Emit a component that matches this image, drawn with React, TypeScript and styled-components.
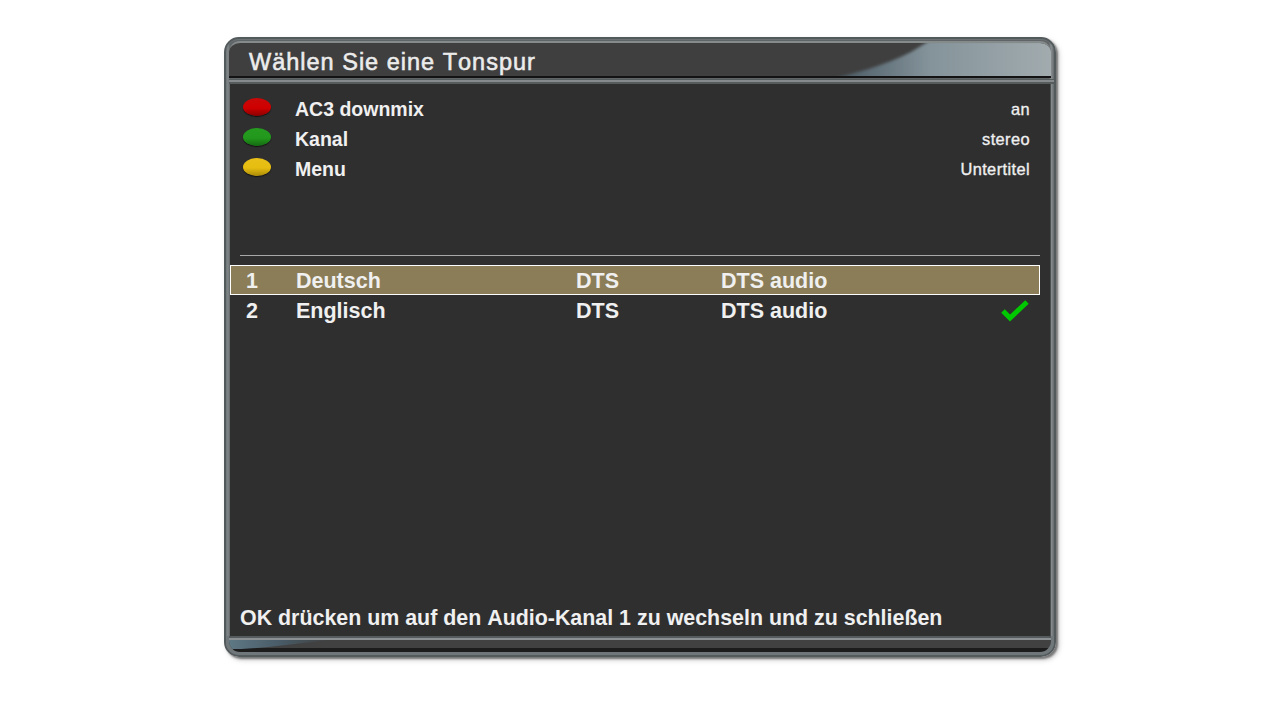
import React from "react";
import styled, { createGlobalStyle } from "styled-components";

const Global = createGlobalStyle`
  html, body { margin: 0; padding: 0; background: #fff; }
  body { width: 1280px; height: 720px; overflow: hidden; font-family: "Liberation Sans", Arial, sans-serif; font-kerning: none; }
`;

const Page = styled.div`
  width: 1280px;
  height: 720px;
  padding: 37px 0 0 224px;
  box-sizing: border-box;
`;

const Frame = styled.div`
  position: relative;
  width: 832px;
  height: 620px;
  box-sizing: border-box;
  display: flex;
  flex-direction: column;
  border-radius: 15px;
  border: 2px solid #535a5c;
  background: linear-gradient(to right, #6f7678, #828889 2px, #5f6567 4px, #5f6567 calc(100% - 5px), #8a9091 calc(100% - 3px), #666c6e 100%);
  padding: 0 3px 0 4px;
  box-shadow: 2px 2px 2px rgba(90, 90, 90, 0.75), 3px 3px 5px rgba(120, 120, 120, 0.4);
`;

const Header = styled.div`
  position: relative;
  height: 45px;
  margin: 0 -3px 0 -4px;
  flex: none;
  box-sizing: border-box;
  border-radius: 13px 13px 0 0;
  border-top: 1px solid #6c7273;
  overflow: hidden;
  display: flex;
  align-items: flex-start;
`;

const HeaderInner = styled.div`
  position: relative;
  margin: 1px 3px 0 3px;
  flex: 1;
  height: 37px;
  background: #3f3f3f;
  border-top: 2px solid #858a8b;
  border-bottom: 2px solid #131313;
  box-sizing: border-box;
  border-radius: 11px 11px 0 0;
  overflow: hidden;
`;

const Sheen = styled.svg`
  position: absolute;
  right: 0;
  top: 0;
  width: 240px;
  height: 36px;
`;

const Title = styled.h1`
  position: relative;
  margin: 0;
  padding: 6px 0 0 20px;
  font-size: 23.5px;
  line-height: 26px;
  font-weight: 400;
  letter-spacing: 1px;
  color: #ececec;
  -webkit-text-stroke: 0.55px #ececec;
`;

const HeaderRule = styled.div`
  position: absolute;
  left: 3px;
  right: 0;
  bottom: 0;
  height: 5px;
  background: linear-gradient(#555a5b, #555a5b 1px, #858a8c 1px, #858a8c 3px, #565b5c 3px);
`;

const Panel = styled.main`
  flex: 1;
  display: flex;
  flex-direction: column;
  background: #2f2f2f;
  min-height: 0;
  border-right: 1px solid #4a4f50;
  padding-top: 10px;
`;

const KeyList = styled.div`
  display: flex;
  flex-direction: column;
  padding: 0 20px 0 13px;
  height: 161px;
  flex: none;
  box-sizing: border-box;
`;

const KeyRow = styled.div`
  display: flex;
  align-items: center;
  height: 30px;
  color: #f0f0f0;
`;

const Pill = styled.span<{ $c: string; $d: string; $l: string }>`
  width: 28px;
  height: 18px;
  flex: none;
  margin-top: -5px;
  border-radius: 50%;
  background: linear-gradient(${(p) => p.$l}, ${(p) => p.$c} 55%, ${(p) => p.$d} 100%);
  box-shadow: 0 1px 1px #141414;
`;

const KeyLabel = styled.span`
  margin-left: 24px;
  flex: 1;
  font-size: 19.5px;
  font-weight: 700;
`;

const KeyValue = styled.span`
  padding-top: 1px;
  font-size: 16.4px;
  font-weight: 400;
  letter-spacing: 0.4px;
  -webkit-text-stroke: 0.35px #f0f0f0;
`;

const Divider = styled.hr`
  flex: none;
  margin: 0 10px 9px 10px;
  border: 0;
  height: 1px;
  background: #a8a8a8;
`;

const Tracks = styled.div`
  flex: 1;
  padding-right: 10px;
`;

const Track = styled.div<{ $active?: boolean }>`
  height: 30px;
  box-sizing: border-box;
  padding-top: 2px;
  display: grid;
  grid-template-columns: 65px 280px 145px 1fr 40px;
  align-items: center;
  color: #f0f0f0;
  font-size: 21.5px;
  font-weight: 700;
  border: 1px solid ${(p) => (p.$active ? "#fff" : "transparent")};
  background: ${(p) => (p.$active ? "#8b7d58" : "transparent")};
`;

const Num = styled.span`
  padding-left: 15px;
`;

const Check = styled.svg`
  width: 30px;
  height: 26px;
  display: block;
  margin-top: -2px;
`;

const Hint = styled.div`
  flex: none;
  height: 30px;
  padding: 0 0 3px 10px;
  color: #f0f0f0;
  font-size: 21.4px;
  font-weight: 700;
  line-height: 30px;
`;

const Foot = styled.footer`
  flex: none;
  height: 19px;
  margin: 0 -3px 0 -4px;
  padding: 0 3px 3px 3px;
  box-sizing: border-box;
  background: #70777a;
  border-radius: 0 0 13px 13px;
  display: flex;
`;

const FootBand = styled.div`
  position: relative;
  flex: 1;
  overflow: hidden;
  border-radius: 0 0 11px 11px;
  background: linear-gradient(#555b5d 0, #555b5d 2px, #8b9092 2px, #8b9092 4px, #414141 4px, #414141 12px, #1c1c1c 12px);
`;

const FootSheen = styled.svg`
  position: absolute;
  left: 0;
  top: 4px;
  width: 100px;
  height: 9px;
`;

export default function App() {
  return (
    <Page>
      <Global />
      <Frame>
        <Header>
          <HeaderInner>
            <Sheen viewBox="0 0 240 36" preserveAspectRatio="none">
              <defs>
                <linearGradient id="sh" x1="0" y1="0.5" x2="1" y2="0.5">
                  <stop offset="0" stopColor="#46535c" stopOpacity="0" />
                  <stop offset="0.08" stopColor="#4a5a64" />
                  <stop offset="0.45" stopColor="#84939a" />
                  <stop offset="1" stopColor="#a4adb0" />
                </linearGradient>
                <filter id="soft" x="-10%" y="-10%" width="120%" height="120%">
                  <feGaussianBlur stdDeviation="1.5" />
                </filter>
              </defs>
              <path d="M10 38 C40 32 75 22 100 9 L118 -2 L250 -2 L250 38 Z" fill="url(#sh)" filter="url(#soft)" />
            </Sheen>
            <Title>Wählen Sie eine Tonspur</Title>
          </HeaderInner>
          <HeaderRule />
        </Header>
        <Panel>
          <KeyList>
            <KeyRow>
              <Pill $c="#d00000" $d="#8a0000" $l="#c80808" />
              <KeyLabel>AC3 downmix</KeyLabel>
              <KeyValue>an</KeyValue>
            </KeyRow>
            <KeyRow>
              <Pill $c="#22991c" $d="#146a10" $l="#259c20" />
              <KeyLabel>Kanal</KeyLabel>
              <KeyValue>stereo</KeyValue>
            </KeyRow>
            <KeyRow>
              <Pill $c="#e6bd10" $d="#a98a08" $l="#e8c018" />
              <KeyLabel>Menu</KeyLabel>
              <KeyValue>Untertitel</KeyValue>
            </KeyRow>
          </KeyList>
          <Divider />
          <Tracks>
            <Track $active>
              <Num>1</Num>
              <span>Deutsch</span>
              <span>DTS</span>
              <span>DTS audio</span>
              <span />
            </Track>
            <Track>
              <Num>2</Num>
              <span>Englisch</span>
              <span>DTS</span>
              <span>DTS audio</span>
              <Check viewBox="0 0 30 26">
                <path d="M4 14 L11 21 L28 5" fill="none" stroke="#00c800" strokeWidth="5" />
              </Check>
            </Track>
          </Tracks>
          <Hint>OK drücken um auf den Audio-Kanal 1 zu wechseln und zu schließen</Hint>
        </Panel>
        <Foot>
          <FootBand>
            <FootSheen viewBox="0 0 100 9" preserveAspectRatio="none">
              <defs>
                <linearGradient id="fs" x1="0" y1="0" x2="1" y2="0">
                  <stop offset="0" stopColor="#5e7884" />
                  <stop offset="0.55" stopColor="#475964" />
                  <stop offset="1" stopColor="#414141" />
                </linearGradient>
              </defs>
              <path d="M0 0 L100 0 C65 4 35 8 12 9 L0 9 Z" fill="url(#fs)" />
            </FootSheen>
          </FootBand>
        </Foot>
      </Frame>
    </Page>
  );
}
